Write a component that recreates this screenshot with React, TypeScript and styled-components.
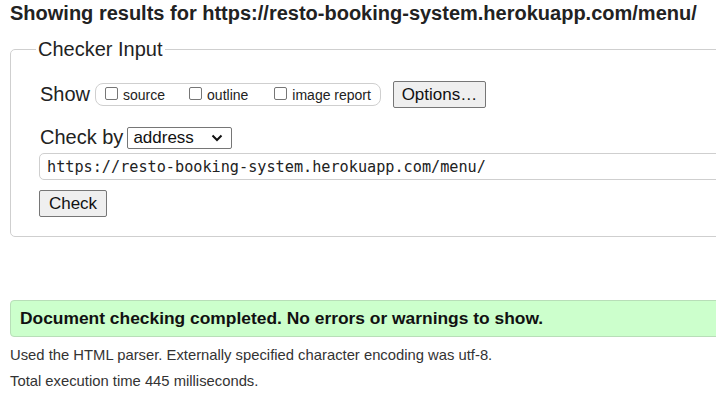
import styled, { createGlobalStyle } from "styled-components";

const GlobalStyle = createGlobalStyle`
  html, body {
    margin: 0;
    padding: 0;
    background: #ffffff;
    overflow: hidden;
  }
  body {
    font-family: "Liberation Sans", Arial, sans-serif;
    color: #222;
  }
`;

const Page = styled.div`
  width: 820px;
  padding: 2px 0 0 10px;
`;

const Title = styled.h2`
  margin: 0;
  font-size: 20px;
  line-height: 23px;
  font-weight: bold;
  color: #222;
  white-space: nowrap;
`;

const Fieldset = styled.fieldset`
  margin: 13px 0 0 0;
  padding: 0 0 19px 29px;
  border: 1px solid #cfcfcf;
  border-radius: 5px;
  display: flex;
  flex-direction: column;
  min-width: 0;
`;

const Legend = styled.legend`
  margin-left: -4px;
  padding: 0 2px;
  font-size: 20px;
  line-height: 22px;
  color: #222;
`;

const Row = styled.div<{ $top: number }>`
  display: flex;
  align-items: center;
  margin-top: ${(p) => p.$top}px;
`;

const Label = styled.span`
  font-size: 20px;
  color: #222;
  margin-right: 5px;
`;

const OptionGroup = styled.div`
  display: flex;
  align-items: center;
  height: 21px;
  padding: 0 9px;
  border: 1px solid #cfcfcf;
  border-radius: 8px;
  margin-right: 12px;
`;

const Option = styled.label<{ $gap: number }>`
  display: flex;
  align-items: center;
  font-size: 14px;
  color: #222;
  margin-right: ${(p) => p.$gap}px;
`;

const Box = styled.span`
  width: 11px;
  height: 11px;
  border: 1px solid #767676;
  border-radius: 2px;
  background: #fff;
  margin-right: 5px;
  margin-top: -3px;
`;

const Button = styled.button<{ $w: number }>`
  width: ${(p) => p.$w}px;
  height: 27px;
  padding: 0;
  font-family: "Liberation Sans", Arial, sans-serif;
  font-size: 17px;
  color: #111;
  background: #efefef;
  border: 1px solid #767676;
  border-radius: 2px;
`;

const Select = styled.div`
  display: flex;
  align-items: center;
  justify-content: space-between;
  box-sizing: border-box;
  width: 105px;
  height: 22px;
  padding: 0 8px 0 5px;
  border: 1px solid #767676;
  border-radius: 2px;
  font-size: 17px;
  color: #111;
  margin-left: -1px;
`;

const UrlInput = styled.div`
  box-sizing: border-box;
  height: 27px;
  margin: 4px 0 0 -1px;
  padding: 0 0 0 7px;
  border: 1px solid #cfcfcf;
  border-radius: 5px;
  display: flex;
  align-items: center;
  font-family: "DejaVu Sans Mono", "Liberation Mono", monospace;
  font-size: 15.2px;
  color: #222;
`;

const CheckRow = styled.div`
  margin: 10px 0 0 -1px;
`;

const Result = styled.div`
  margin-top: 63px;
  box-sizing: border-box;
  height: 37px;
  padding-left: 9px;
  display: flex;
  align-items: center;
  background: #ccffcc;
  border: 1px solid #b8deb8;
  border-radius: 4px;
  font-size: 17.4px;
  font-weight: bold;
  color: #111;
`;

const Note = styled.p<{ $top: number }>`
  margin: ${(p) => p.$top}px 0 0 0;
  font-size: 14.8px;
  line-height: 18px;
  color: #333;
`;

export default function App() {
  return (
    <>
      <GlobalStyle />
      <Page>
        <Title>Showing results for https://resto-booking-system.herokuapp.com/menu/</Title>
        <Fieldset>
          <Legend>Checker Input</Legend>
          <Row $top={21}>
            <Label>Show</Label>
            <OptionGroup>
              <Option $gap={24}>
                <Box />
                source
              </Option>
              <Option $gap={26}>
                <Box />
                outline
              </Option>
              <Option $gap={0}>
                <Box />
                image report
              </Option>
            </OptionGroup>
            <Button $w={93}>Options…</Button>
          </Row>
          <Row $top={18}>
            <Label>Check by</Label>
            <Select>
              address
              <svg width="12" height="8" viewBox="0 0 12 8">
                <path d="M1.5 1.5 L6 6 L10.5 1.5" fill="none" stroke="#111" strokeWidth="2" />
              </svg>
            </Select>
          </Row>
          <UrlInput>https://resto-booking-system.herokuapp.com/menu/</UrlInput>
          <CheckRow>
            <Button $w={68}>Check</Button>
          </CheckRow>
        </Fieldset>
        <Result>Document checking completed. No errors or warnings to show.</Result>
        <Note $top={9}>Used the HTML parser. Externally specified character encoding was utf-8.</Note>
        <Note $top={8}>Total execution time 445 milliseconds.</Note>
      </Page>
    </>
  );
}
